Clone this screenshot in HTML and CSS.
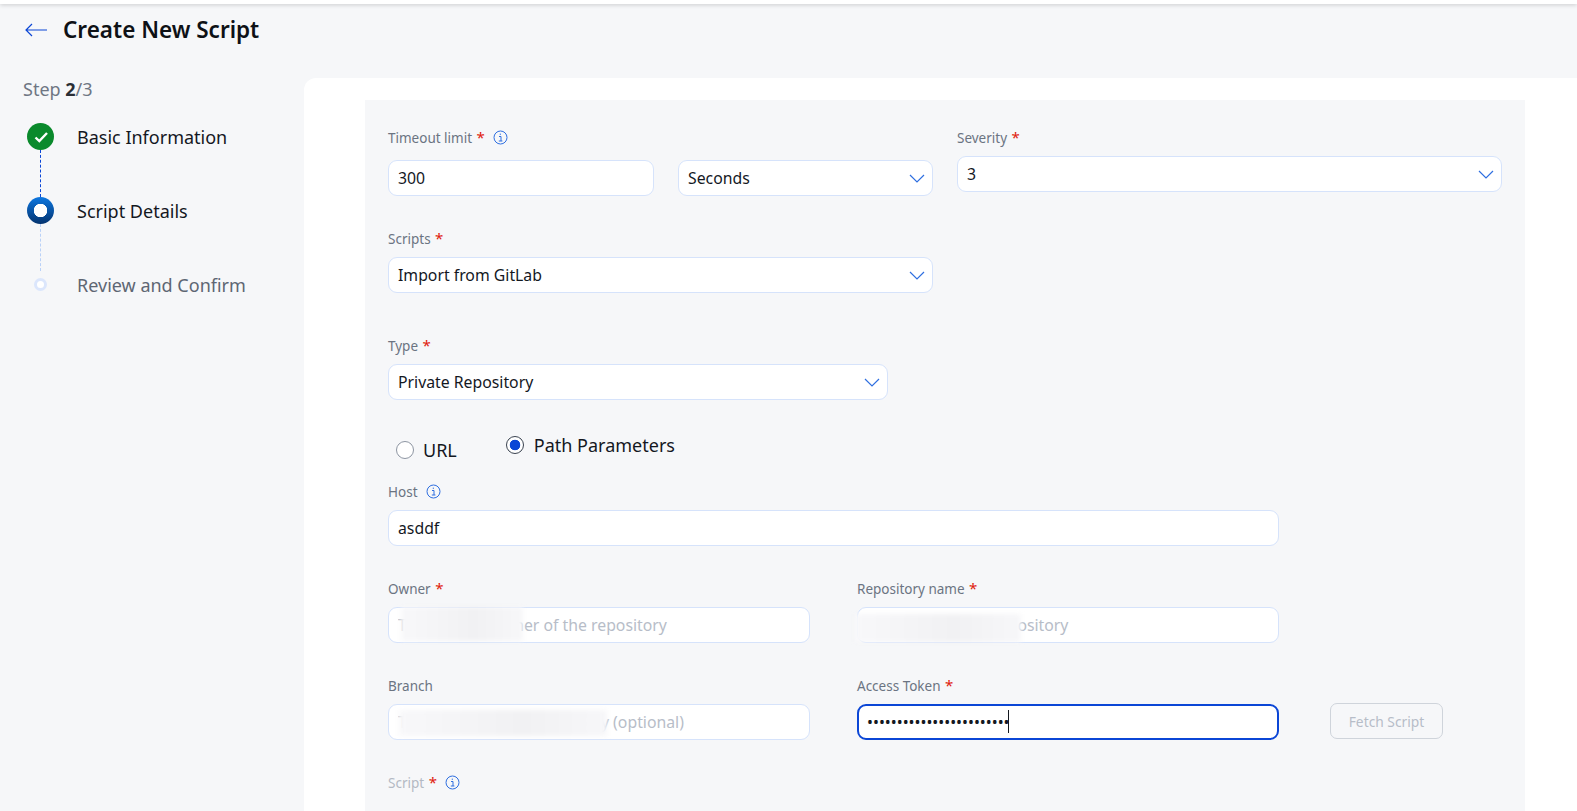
FILE: index.html
```html
<!DOCTYPE html>
<html lang="en">
<head>
    <meta charset="UTF-8">
    <title>Create New Script</title>
    <link rel="stylesheet" href="styles.css">
</head>
<body>
    <div class="topbar"></div>
    <div class="page-header">
        <svg class="back-icon" width="24" height="14" viewBox="0 0 24 14"><path d="M8 1L2 7l6 6M2 7h21" fill="none" stroke="#0b46d6" stroke-width="1.2"/></svg>
        <h1>Create New Script</h1>
    </div>

    <div class="layout">
        <aside class="sidebar">
            <div class="step-count">Step <b>2</b>/3</div>
            <div class="steps">
                <div class="step">
                    <div class="step-mark">
                        <span class="dot dot-done">
                            <svg width="14" height="12" viewBox="0 0 14 12"><path d="M1.5 6.5l3.8 3.6L13 2" fill="none" stroke="#fff" stroke-width="2.4"/></svg>
                        </span>
                        <span class="rail rail-done"></span>
                    </div>
                    <div class="step-name">Basic Information</div>
                </div>
                <div class="step">
                    <div class="step-mark">
                        <span class="dot dot-active"></span>
                        <span class="rail"></span>
                    </div>
                    <div class="step-name">Script Details</div>
                </div>
                <div class="step">
                    <div class="step-mark">
                        <span class="dot dot-next"></span>
                    </div>
                    <div class="step-name step-name-next">Review and Confirm</div>
                </div>
            </div>
        </aside>

        <main class="panel">
            <form class="form-box">
                <div class="row row-first">
                    <div class="field field-timeout">
                        <div class="label label-wide">Timeout limit <span class="req">*</span>
                            <svg class="info" width="15" height="15" viewBox="0 0 15 15"><circle cx="7.5" cy="7.5" r="6.5" fill="none" stroke="#2f6fe0"/><path d="M6 6.5h2v4.5M5.8 11h3.6M7.3 3.6v1.3" fill="none" stroke="#2f6fe0"/></svg>
                        </div>
                        <div class="timeout-inputs">
                            <input class="input input-count" type="text" value="300">
                            <div class="select select-unit">Seconds
                                <svg class="chev" width="16" height="9" viewBox="0 0 16 9"><path d="M1 1l7 7 7-7" fill="none" stroke="#2f6fe0" stroke-width="1.2"/></svg>
                            </div>
                        </div>
                    </div>
                    <div class="field field-severity">
                        <div class="label">Severity <span class="req">*</span></div>
                        <div class="select">3
                            <svg class="chev" width="16" height="9" viewBox="0 0 16 9"><path d="M1 1l7 7 7-7" fill="none" stroke="#2f6fe0" stroke-width="1.2"/></svg>
                        </div>
                    </div>
                </div>

                <div class="field field-scripts">
                    <div class="label">Scripts <span class="req">*</span></div>
                    <div class="select">Import from GitLab
                        <svg class="chev" width="16" height="9" viewBox="0 0 16 9"><path d="M1 1l7 7 7-7" fill="none" stroke="#2f6fe0" stroke-width="1.2"/></svg>
                    </div>
                </div>

                <div class="field field-type">
                    <div class="label">Type <span class="req">*</span></div>
                    <div class="select">Private Repository
                        <svg class="chev" width="16" height="9" viewBox="0 0 16 9"><path d="M1 1l7 7 7-7" fill="none" stroke="#2f6fe0" stroke-width="1.2"/></svg>
                    </div>
                </div>

                <div class="radios">
                    <div class="radio radio-url"><span class="radio-dot"></span>URL</div>
                    <div class="radio radio-path"><span class="radio-dot radio-dot-on"></span>Path Parameters</div>
                </div>

                <div class="field field-host">
                    <div class="label">Host
                        <svg class="info" width="15" height="15" viewBox="0 0 15 15"><circle cx="7.5" cy="7.5" r="6.5" fill="none" stroke="#2f6fe0"/><path d="M6 6.5h2v4.5M5.8 11h3.6M7.3 3.6v1.3" fill="none" stroke="#2f6fe0"/></svg>
                    </div>
                    <input class="input" type="text" value="asddf">
                </div>

                <div class="row row-repo">
                    <div class="field field-half">
                        <div class="label">Owner <span class="req">*</span></div>
                        <div class="masked">
                            <input class="input" type="text" placeholder="The account owner of the repository">
                            <span class="smudge smudge-owner"></span>
                        </div>
                    </div>
                    <div class="field field-half">
                        <div class="label">Repository name <span class="req">*</span></div>
                        <div class="masked">
                            <input class="input" type="text" placeholder="The name of the repository">
                            <span class="smudge smudge-repo"></span>
                        </div>
                    </div>
                </div>

                <div class="row row-branch">
                    <div class="field field-half">
                        <div class="label">Branch</div>
                        <div class="masked">
                            <input class="input" type="text" placeholder="The branch of the repository (optional)">
                            <span class="smudge smudge-branch"></span>
                        </div>
                    </div>
                    <div class="field field-half">
                        <div class="label">Access Token <span class="req">*</span></div>
                        <div class="masked">
                            <input class="input input-focus" type="password" value="........................">
                            <span class="caret"></span>
                        </div>
                    </div>
                    <button class="fetch-btn" type="button" disabled>Fetch Script</button>
                </div>

                <div class="label label-off">Script <span class="req">*</span>
                    <svg class="info" width="15" height="15" viewBox="0 0 15 15"><circle cx="7.5" cy="7.5" r="6.5" fill="none" stroke="#2f6fe0"/><path d="M6 6.5h2v4.5M5.8 11h3.6M7.3 3.6v1.3" fill="none" stroke="#2f6fe0"/></svg>
                </div>
            </form>
        </main>
    </div>
</body>
</html>
```

FILE: styles.css
```css
* {
    margin: 0;
    padding: 0;
    box-sizing: border-box;
}

html, body {
    height: 100%;
    overflow: hidden;
}

body {
    font-family: "Noto Sans", sans-serif;
    background: #f6f7f9;
    color: #14181f;
    display: flex;
    flex-direction: column;
}

.topbar {
    height: 4px;
    background: #fff;
    box-shadow: 0 1px 4px rgba(0, 0, 0, 0.18);
}

.page-header {
    height: 74px;
    padding: 0 0 24px 24px;
    display: flex;
    align-items: center;
    gap: 15px;
}

.back-icon {
    margin-top: 2px;
}

.page-header h1 {
    font-size: 22.5px;
    font-weight: 600;
    color: #0e1116;
}

.layout {
    flex: 1;
    display: flex;
    min-height: 0;
}

.sidebar {
    width: 304px;
    padding-left: 23px;
}

.step-count {
    font-size: 18px;
    line-height: 24px;
    margin-top: -1px;
    color: #6e7683;
}

.step-count b {
    color: #2a2e35;
    font-weight: 700;
}

.steps {
    margin-top: 22px;
    padding-left: 4px;
}

.step {
    display: flex;
    height: 74px;
}

.step-mark {
    width: 27px;
    display: flex;
    flex-direction: column;
    align-items: center;
    flex-shrink: 0;
}

.dot {
    border-radius: 50%;
    display: flex;
    align-items: center;
    justify-content: center;
    flex-shrink: 0;
}

.dot-done {
    width: 27px;
    height: 27px;
    background: #0a8a2c;
}

.dot-active {
    width: 27px;
    height: 27px;
    background: radial-gradient(circle, #fff 0 6.5px, transparent 7px), linear-gradient(#0d77e0, #04336f);
}

.dot-next {
    width: 13px;
    height: 13px;
    margin-top: 7px;
    background: #fff;
    border: 3px solid #dbe6fc;
}

.rail {
    flex: 1;
    border-left: 1px dashed #b9d1f8;
}

.rail-done {
    border-left-color: #0b46d6;
}

.step-name {
    margin-left: 23px;
    padding-top: 1px;
    font-size: 18px;
    line-height: 27px;
    color: #14181f;
}

.step-name-next {
    color: #5e6673;
}

.panel {
    flex: 1;
    background: #fff;
    border-top-left-radius: 12px;
    padding: 22px 52px 0 61px;
    min-height: 0;
    overflow: hidden;
}

.form-box {
    background: #f6f7f9;
    height: 100%;
    padding: 29px 0 0 23px;
}

.row {
    display: flex;
}

.field-timeout {
    width: 545px;
}

.field-severity {
    width: 545px;
    margin-left: 24px;
}

.timeout-inputs {
    display: flex;
    gap: 24px;
    margin-top: 13px;
}

.label {
    height: 18px;
    font-size: 13.5px;
    line-height: 18px;
    color: #6b7482;
    margin-bottom: 9px;
}

.label-wide {
    margin-bottom: 0;
}

.label-off {
    color: #b3b9c3;
    margin-top: 34px;
}

.req {
    color: #e0200c;
    font-size: 15px;
    line-height: 0;
    margin-left: 1px;
}

.info {
    margin-left: 5px;
    vertical-align: -2px;
}

.input, .select {
    width: 100%;
    height: 36px;
    background: #fff;
    border: 1px solid #d6e3fb;
    border-radius: 9px;
    padding: 0 9px;
    font-family: inherit;
    font-size: 15.8px;
    color: #14181f;
    outline: none;
}

.select {
    display: flex;
    align-items: center;
    justify-content: space-between;
    padding-right: 7px;
}

.input-count {
    width: 266px;
}

.select-unit {
    width: 255px;
}

.input::placeholder {
    color: #b7bdc8;
    opacity: 1;
}

.field-scripts {
    width: 545px;
    margin-top: 34px;
}

.field-type {
    width: 500px;
    margin-top: 44px;
}

.radios {
    display: flex;
    height: 83px;
    font-size: 18px;
    color: #14181f;
}

.radio {
    display: flex;
    align-items: center;
    height: 24px;
}

.radio-url {
    margin: 38px 0 0 8px;
}

.radio-path {
    margin: 33px 0 0 49px;
}

.radio-dot {
    width: 18px;
    height: 18px;
    border-radius: 50%;
    background: #fff;
    border: 1px solid #8d95a2;
    margin-right: 9px;
}

.radio-dot-on {
    border-color: #3a4350;
    background: radial-gradient(circle, #0b46d6 0 5px, #fff 5.6px);
    margin-right: 10px;
}

.field-host {
    width: 891px;
}

.row-repo {
    margin-top: 34px;
}

.row-branch {
    margin-top: 34px;
}

.field-half {
    width: 422px;
    margin-right: 47px;
}

.masked {
    position: relative;
}

.smudge {
    position: absolute;
    background: linear-gradient(90deg, #f8f8fa, #f1f1f3 60%, #f7f7f9);
    filter: blur(2px);
}

.smudge-owner {
    left: 13px;
    top: 0;
    width: 122px;
    height: 34px;
}

.smudge-repo {
    left: -2px;
    top: 7px;
    width: 166px;
    height: 28px;
}

.smudge-branch {
    left: 11px;
    top: 6px;
    width: 208px;
    height: 26px;
}

.input-focus {
    border: 2px solid #0b46d6;
    padding: 0 8px;
}

.caret {
    position: absolute;
    left: 151px;
    top: 6px;
    width: 1px;
    height: 23px;
    background: #14181f;
}

.fetch-btn {
    width: 113px;
    height: 36px;
    margin: 26px 0 0 4px;
    background: transparent;
    border: 1px solid #cfd4db;
    border-radius: 7px;
    font-family: inherit;
    font-size: 13.8px;
    color: #b7bdc8;
}
```
